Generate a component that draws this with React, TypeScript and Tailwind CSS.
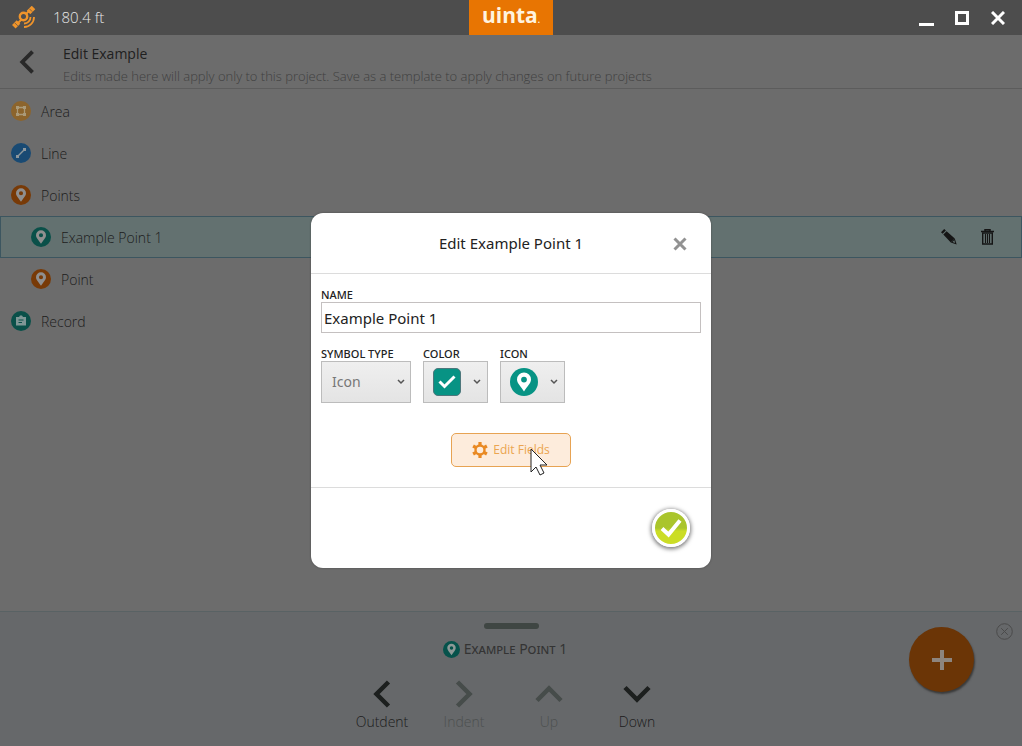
import { useState } from "react";

type PinProps = { className: string; size: string };

function Pin({ className, size }: PinProps) {
  return (
    <svg viewBox="0 0 28 28" className={`${size} shrink-0`} aria-hidden="true">
      <circle cx="14" cy="14" r="14" className={className} />
      <path
        fillRule="evenodd"
        fill="currentColor"
        d="M14 4.500a7 7 0 0 0-7 7c0 3.700 3.500 6.500 7 12 3.500-5.500 7-8.300 7-12a7 7 0 0 0-7-7zm0 4.200a2.900 2.900 0 1 1 0 5.800 2.900 2.900 0 0 1 0-5.800z"
      />
    </svg>
  );
}

function AreaIcon() {
  return (
    <svg viewBox="0 0 20 20" className="size-5 shrink-0" aria-hidden="true">
      <circle cx="10" cy="10" r="10" fill="#8c642c" />
      <path d="M6.500 6.500h7v7h-7z" fill="none" stroke="#aa9a79" strokeWidth="1.300" />
      <path d="M5 5h3v3H5zM12 5h3v3h-3zM5 12h3v3H5zM12 12h3v3h-3z" fill="#aa9a79" />
    </svg>
  );
}

function LineIcon() {
  return (
    <svg viewBox="0 0 20 20" className="size-5 shrink-0" aria-hidden="true">
      <circle cx="10" cy="10" r="10" fill="#194a73" />
      <path d="M6.500 13.500l7-7" stroke="#8e979c" strokeWidth="1.500" />
      <path d="M5 12h3v3H5zM12 5h3v3h-3z" fill="#8e979c" />
    </svg>
  );
}

function RecordIcon() {
  return (
    <svg viewBox="0 0 20 20" className="size-5 shrink-0" aria-hidden="true">
      <circle cx="10" cy="10" r="10" fill="#0a5049" />
      <path d="M5 6h3l1-1.500h2L12 6h3v8.500H5z" fill="#7f9796" />
      <path d="M7.500 9h5M7.500 11.500h3.500" stroke="#0a5049" />
    </svg>
  );
}

function SatelliteIcon() {
  return (
    <svg viewBox="0 0 24 24" className="size-6 shrink-0" fill="none" stroke="#ef942b" aria-hidden="true">
      <path d="M14 8l3-3M6 17l4-4" strokeWidth="1.800" />
      <path d="M16.500 6.500L21.500 1.500M1.800 20.700l4.700-4.700" strokeWidth="5" />
      <path d="M17.300 2.700l3 3M2.800 16.900l3 3" stroke="#4d4d4d" strokeWidth="0.700" />
      <circle cx="11.500" cy="10.500" r="3.700" strokeWidth="2.400" />
      <path d="M12 17.500a6.300 6.300 0 0 0 6.500-6.500M12 21a9.800 9.800 0 0 0 10-10" strokeWidth="1.800" />
    </svg>
  );
}

const turns = {
  left: "rotate-0",
  right: "rotate-180",
  up: "rotate-90",
  down: "-rotate-90",
};

function Chevron({ dir, className }: { dir: keyof typeof turns; className: string }) {
  return (
    <svg viewBox="0 0 28 28" className={`shrink-0 ${turns[dir]} ${className}`} fill="none" stroke="currentColor" aria-hidden="true">
      <path d="M20.500 2L8.500 14l12 12" strokeWidth="4.500" />
    </svg>
  );
}

function Caret({ className = "" }: { className?: string }) {
  return (
    <svg viewBox="0 0 8 6" className={`h-[6px] w-2 shrink-0 ${className}`} fill="none" stroke="#555" strokeWidth="1.500" aria-hidden="true">
      <path d="M1 1l3 3 3-3" />
    </svg>
  );
}

function TopBar() {
  return (
    <header className="relative flex h-[35px] items-center justify-between bg-[#4d4d4d] pr-[14px] pl-3 text-white">
      <div className="flex items-center gap-[17px] text-[#e8e8e8]">
        <SatelliteIcon />
        <span className="text-[15px] font-light">180.4 ft</span>
      </div>
      <div className="absolute inset-y-0 left-1/2 flex w-[84px] -translate-x-1/2 justify-center bg-[#e87502] text-[21px] leading-[31px] font-bold text-[#fff3df]">
        <span>uinta</span>
        <span className="text-[8px] leading-[40px]">.</span>
      </div>
      <div className="flex items-center gap-4">
        <button aria-label="Minimize" className="flex h-5 w-5 items-end justify-center pb-[2px]">
          <span className="h-[3px] w-[15px] bg-white" />
        </button>
        <button aria-label="Maximize" className="flex h-5 w-5 items-center justify-center">
          <span className="size-[14px] border-3 border-white" />
        </button>
        <button aria-label="Close" className="flex h-5 w-5 items-center justify-center">
          <svg viewBox="0 0 14 14" className="size-[14px]" stroke="currentColor" strokeWidth="3">
            <path d="M1 1l12 12M13 1L1 13" />
          </svg>
        </button>
      </div>
    </header>
  );
}

const rows = [
  { name: "Area", icon: <AreaIcon /> },
  { name: "Line", icon: <LineIcon /> },
  { name: "Points", icon: <Pin size="size-5" className="fill-[#783a07]" /> },
  { name: "Example Point 1", icon: <Pin size="size-5" className="fill-[#0a5049]" />, nested: true, selected: true },
  { name: "Point", icon: <Pin size="size-5" className="fill-[#783a07]" />, nested: true },
  { name: "Record", icon: <RecordIcon /> },
];

function LayerList() {
  return (
    <ul className="flex-1 pt-px">
      {rows.map((row) => (
        <li
          key={row.name}
          className={`flex h-[42px] items-center justify-between border pr-[27px] ${
            row.selected ? "border-[#3c5660] bg-[#637170]" : "border-transparent"
          } ${row.nested ? "pl-[30px]" : "pl-[10px]"}`}
        >
          <div className="flex items-center gap-[10px] text-[#8f8f8f]">
            {row.icon}
            <span className="pt-px text-sm font-light text-[#1c1c1c]">{row.name}</span>
          </div>
          {row.selected && (
            <div className="flex items-center gap-6 text-[#151515]">
              <button aria-label="Edit">
                <svg viewBox="0 0 16 16" className="size-4" fill="currentColor">
                  <path d="M0 3.200L3.200 0l1.700 1.500-3.300 3.300zM2.300 5.500l3.300-3.300 8.200 7.300-4 4z" />
                  <path d="M9.800 13.500l4-4 1.900 6z" />
                  <path d="M11.500 13l1.800-1.800.9 2.800z" fill="#637170" />
                </svg>
              </button>
              <button aria-label="Delete">
                <svg viewBox="0 0 13 16" className="h-4 w-[13px]" fill="none" stroke="currentColor">
                  <path d="M0 2.500h13M4 2V.8h5V2" strokeWidth="1.500" />
                  <path d="M1.700 4h9.600v11H1.700z" strokeWidth="1.400" />
                  <path d="M4.500 5v9M6.500 5v9M8.500 5v9" strokeWidth="1.100" />
                </svg>
              </button>
            </div>
          )}
        </li>
      ))}
    </ul>
  );
}

function BottomPanel() {
  return (
    <footer className="relative flex h-[135px] flex-col items-center border-t border-[#596264] bg-[#66686a] pt-[11px]">
      <div className="h-[6px] w-[55px] rounded-full bg-[#3f4643]" />
      <div className="mt-2 flex h-6 items-center gap-1 pr-3 text-[#8d9997]">
        <Pin size="size-[17px]" className="fill-[#06524b]" />
        <span className="font-['Noto_Sans',sans-serif] text-sm text-[#343434] [font-variant:small-caps]">Example Point 1</span>
      </div>
      <div className="mt-[19px] grid grid-cols-[82px_82px_88px_88px] text-sm leading-5 font-light text-[#1c1c1c]">
        <button className="flex flex-col items-center gap-1">
          <Chevron dir="left" className="size-7 text-[#1c1f1e]" />
          Outdent
        </button>
        <button disabled className="flex flex-col items-center gap-1 text-[#4d5050]">
          <Chevron dir="right" className="size-7 text-[#464c4a]" />
          Indent
        </button>
        <button disabled className="flex flex-col items-center gap-1 text-[#4d5050]">
          <Chevron dir="up" className="size-7 text-[#464c4a]" />
          Up
        </button>
        <button className="flex flex-col items-center gap-1">
          <Chevron dir="down" className="size-7 text-[#1c1f1e]" />
          Down
        </button>
      </div>
      <button
        aria-label="Add"
        className="absolute top-[15px] right-12 flex size-[65px] items-center justify-center rounded-full bg-[#6b3506] text-[#8d857f] shadow-[1px_2px_2px_#3a3a3a]"
      >
        <svg viewBox="0 0 20 20" className="size-5" stroke="currentColor" strokeWidth="4">
          <path d="M10 0v20M0 10h20" />
        </svg>
      </button>
      <button aria-label="Close panel" className="absolute top-[11px] right-[9px] text-[#4b4b4b]">
        <svg viewBox="0 0 17 17" className="size-[17px]" fill="none" stroke="currentColor">
          <circle cx="8.500" cy="8.500" r="7.800" />
          <path d="M5.200 5.200l6.600 6.600M11.800 5.200l-6.600 6.600" />
        </svg>
      </button>
    </footer>
  );
}

const labelStyle = "block text-[11px] leading-[14px] font-medium text-[#222]";
const pickerStyle =
  "flex h-[42px] w-[65px] items-center justify-between border border-[#bcbcbc] bg-linear-to-b from-[#efefef] to-[#e4e4e4] pr-[6px] pl-[9px]";

function EditDialog() {
  const [name, setName] = useState("Example Point 1");

  return (
    <div role="dialog" aria-labelledby="dialog-title" className="w-[400px] max-w-full rounded-[12px] bg-white font-['Noto_Sans',sans-serif] text-[#222] shadow-[0_0_2px_#444]">
      <div className="relative flex h-[61px] items-center justify-center border-b border-[#dcdcdc] pt-px">
        <h2 id="dialog-title" className="text-[15px]">Edit Example Point 1</h2>
        <button aria-label="Close dialog" className="absolute right-6 text-[#929292]">
          <svg viewBox="0 0 14 14" className="size-[14px]" stroke="currentColor" strokeWidth="3">
            <path d="M1.500 1.500l11 11M12.500 1.500l-11 11" />
          </svg>
        </button>
      </div>

      <div className="px-[10px] pt-[14px] pb-5">
        <label htmlFor="name" className={labelStyle}>NAME</label>
        <input
          id="name"
          value={name}
          onChange={(e) => setName(e.target.value)}
          className="block h-[31px] w-full border border-[#c4c0c0] px-[2px] text-[15px] outline-none"
        />
        <div className="mt-[14px] flex gap-3">
          <div>
            <label htmlFor="symbol" className={labelStyle}>SYMBOL TYPE</label>
            <div className="relative">
              <select
                id="symbol"
                className="block h-[42px] w-[90px] appearance-none border border-[#bcbcbc] bg-linear-to-b from-[#efefef] to-[#e4e4e4] pl-[10px] text-sm text-[#777]"
              >
                <option>Icon</option>
              </select>
              <Caret className="pointer-events-none absolute top-[18px] right-[6px]" />
            </div>
          </div>
          <div>
            <label htmlFor="color" className={labelStyle}>COLOR</label>
            <button id="color" aria-haspopup="listbox" className={pickerStyle}>
              <span className="flex size-7 items-center justify-center rounded-[5px] border border-[#4d777c] bg-[#079384]">
                <svg viewBox="0 0 18 14" className="h-[14px] w-[18px]" fill="none" stroke="white" strokeWidth="3">
                  <path d="M1.500 6.500l5 5L16.500 1.500" />
                </svg>
              </span>
              <Caret />
            </button>
          </div>
          <div>
            <label htmlFor="icon" className={labelStyle}>ICON</label>
            <button id="icon" aria-haspopup="listbox" className={`${pickerStyle} text-white`}>
              <Pin size="size-7" className="fill-[#079384]" />
              <Caret />
            </button>
          </div>
        </div>
        <div className="mt-[30px] flex justify-center">
          <button className="relative flex h-[34px] w-[120px] items-center justify-center gap-[5px] rounded-[5px] border border-[#e7a353] bg-[#fdecdc] font-['Open_Sans',sans-serif] text-xs text-[#eba550]">
            <svg viewBox="0 0 16 16" className="size-4" fill="none" stroke="#e98a24" aria-hidden="true">
              <circle cx="8" cy="8" r="4.500" strokeWidth="2.400" />
              <path
                d="M8 0v3.500M8 12.500V16M1.100 4l3 1.700M11.900 10.300l3 1.700M14.900 4l-3 1.700M4.100 10.300l-3 1.700"
                strokeWidth="3.200"
              />
            </svg>
            Edit Fields
            <svg viewBox="0 0 19 28" className="absolute top-[14px] left-[78px] h-7 w-[19px]" aria-hidden="true">
              <path d="M1 1v23l5-5 4 8 4-2-4-8h7z" fill="white" stroke="#222" />
            </svg>
          </button>
        </div>
      </div>

      <div className="flex h-[81px] items-center justify-end border-t border-[#dcdcdc] pr-[21px]">
        <button
          aria-label="Confirm"
          className="flex size-[38px] items-center justify-center rounded-full border-3 border-white bg-linear-to-b from-[#aac52c] from-50% to-[#cbdd25] to-60% shadow-[0_1px_4px_1px_#777]"
        >
          <svg viewBox="0 0 22 20" className="h-5 w-[22px]" fill="none" stroke="white" strokeWidth="4">
            <path d="M2 10.500l6.500 6L20 2.500" />
          </svg>
        </button>
      </div>
    </div>
  );
}

export default function App() {
  return (
    <div className="relative flex min-h-screen flex-col bg-[#6c6c6c] font-['Open_Sans','Noto_Sans',sans-serif]">
      <TopBar />
      <div className="flex h-[54px] items-center gap-6 border-b border-[#5c5c5c] pl-[15px]">
        <button aria-label="Back">
          <Chevron dir="left" className="size-6 text-[#292929]" />
        </button>
        <div className="pt-[6px] text-[#202020]">
          <h1 className="text-sm leading-[22px]">Edit Example</h1>
          <p className="text-[13px] leading-[22px] font-light text-[#404040]">
            Edits made here will apply only to this project. Save as a template to apply changes on future projects
          </p>
        </div>
      </div>
      <LayerList />
      <BottomPanel />
      <div className="absolute inset-x-0 top-[35px] bottom-0 flex items-center justify-center">
        <EditDialog />
      </div>
    </div>
  );
}
